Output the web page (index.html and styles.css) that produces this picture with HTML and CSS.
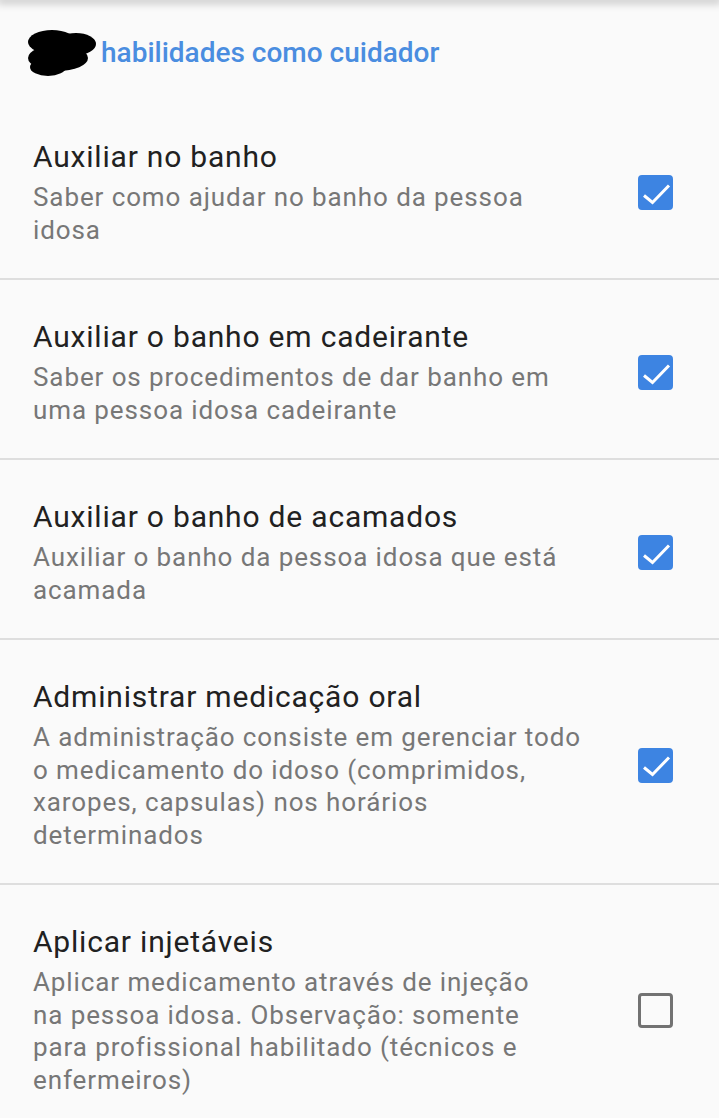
FILE: index.html
```html
<!DOCTYPE html>
<html>
<head>
    <title>Habilidades como cuidador</title>
    <link rel="stylesheet" href="styles.css">
</head>
<body>
    <div class="topbar"></div>
    <header class="header">
        <svg class="blot" width="76" height="50" viewBox="0 0 76 50">
            <ellipse cx="28" cy="15" rx="24" ry="12" fill="#000"/>
            <ellipse cx="52" cy="17" rx="20" ry="11" fill="#000"/>
            <ellipse cx="34" cy="31" rx="30" ry="13" fill="#000"/>
            <ellipse cx="24" cy="40" rx="18" ry="9" fill="#000"/>
        </svg>
        <h1>habilidades como cuidador</h1>
    </header>
    <ul class="skills">
        <li class="skill">
            <div class="skill-text">
                <h2>Auxiliar no banho</h2>
                <p>Saber como ajudar no banho da pessoa<br>idosa</p>
            </div>
            <span class="box checked"><svg viewBox="0 0 36 36"><path d="M6 20.5l8.5 7 16.5-17"/></svg></span>
        </li>
        <li class="skill">
            <div class="skill-text">
                <h2>Auxiliar o banho em cadeirante</h2>
                <p>Saber os procedimentos de dar banho em<br>uma pessoa idosa cadeirante</p>
            </div>
            <span class="box checked"><svg viewBox="0 0 36 36"><path d="M6 20.5l8.5 7 16.5-17"/></svg></span>
        </li>
        <li class="skill">
            <div class="skill-text">
                <h2>Auxiliar o banho de acamados</h2>
                <p>Auxiliar o banho da pessoa idosa que está<br>acamada</p>
            </div>
            <span class="box checked"><svg viewBox="0 0 36 36"><path d="M6 20.5l8.5 7 16.5-17"/></svg></span>
        </li>
        <li class="skill">
            <div class="skill-text">
                <h2>Administrar medicação oral</h2>
                <p>A administração consiste em gerenciar todo<br>o medicamento do idoso (comprimidos,<br>xaropes, capsulas) nos horários<br>determinados</p>
            </div>
            <span class="box checked"><svg viewBox="0 0 36 36"><path d="M6 20.5l8.5 7 16.5-17"/></svg></span>
        </li>
        <li class="skill">
            <div class="skill-text">
                <h2>Aplicar injetáveis</h2>
                <p>Aplicar medicamento através de injeção<br>na pessoa idosa. Observação: somente<br>para profissional habilitado (técnicos e<br>enfermeiros)</p>
            </div>
            <span class="box"></span>
        </li>
    </ul>
</body>
</html>
```

FILE: styles.css
```css
body {
    background-color: #fafafa;
    color: #212121;
    font-family: Roboto, "Noto Sans", sans-serif;
    margin: 0;
    padding: 0;
    overflow: hidden;
}

.topbar {
    height: 0;
    box-shadow: 0 0 8px 3px rgba(0, 0, 0, 0.25);
}

.header {
    display: flex;
    align-items: center;
    height: 100px;
    padding: 4px 0 0 24px;
    box-sizing: border-box;
}

.blot {
    display: block;
}

.header h1 {
    margin: 0 0 0 1px;
    font-size: 28px;
    font-weight: 500;
    color: #4a8de0;
}

.skills {
    list-style: none;
    margin: 0;
    padding: 0;
}

.skill {
    display: flex;
    align-items: center;
    padding: 39px 46px 32px 33px;
    border-bottom: 2px solid #dedede;
}

.skill-text {
    flex: 1;
    white-space: nowrap;
}

.skill-text h2 {
    margin: 0 0 6px 0;
    font-size: 30px;
    line-height: 36px;
    letter-spacing: 0.8px;
    font-weight: 400;
    color: #212121;
}

.skill-text p {
    margin: 0;
    font-size: 26px;
    line-height: 32.5px;
    letter-spacing: 0.9px;
    color: #777777;
}

.box {
    margin-left: auto;
    width: 29px;
    height: 29px;
    border: 3.5px solid #727272;
    border-radius: 4px;
}

.box.checked {
    background-color: #3d84e2;
    border-color: #3d84e2;
}

.box svg {
    display: block;
    width: 36px;
    height: 36px;
    margin: -3.5px;
    fill: none;
    stroke: #fff;
    stroke-width: 3;
}
```
